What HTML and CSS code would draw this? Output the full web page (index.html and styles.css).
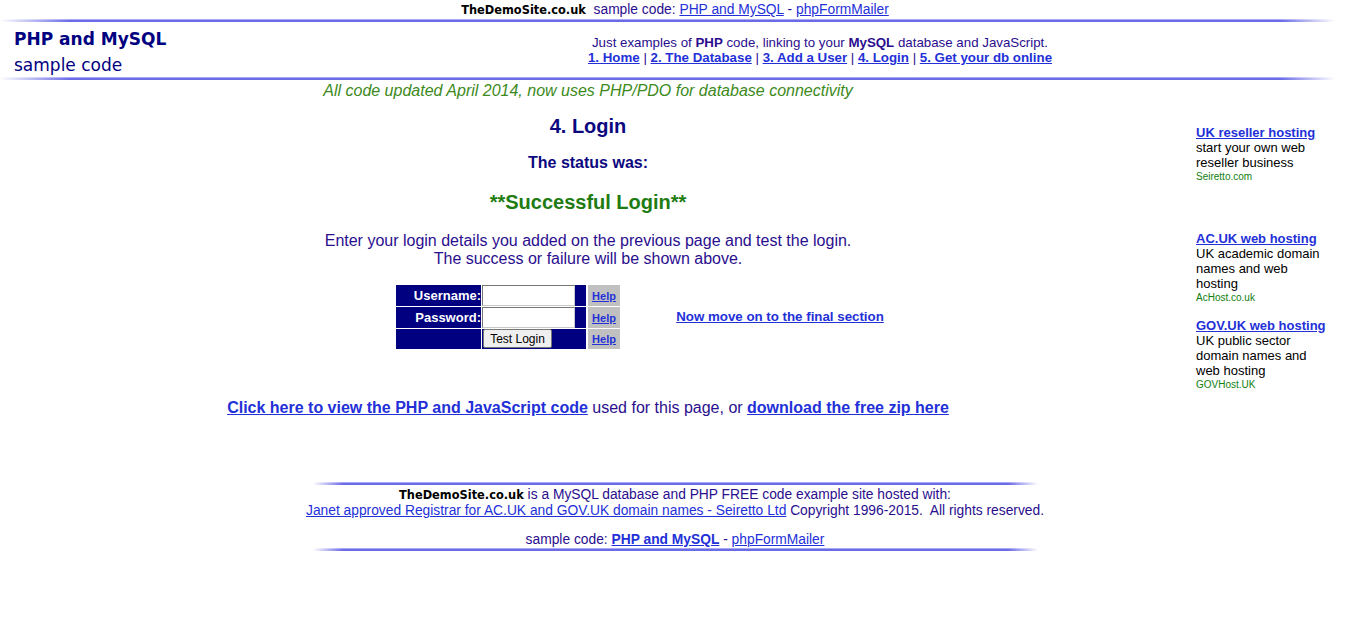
FILE: index.html
```html
<!DOCTYPE html>
<html>
<head>
<meta charset="utf-8">
<title>PHP and MySQL sample code - Login</title>
<link rel="stylesheet" href="styles.css">
</head>
<body>
<div class="topbar"><span class="brand">TheDemoSite.co.uk</span>&nbsp; sample code: <a href="#">PHP and MySQL</a> - <a href="#">phpFormMailer</a></div>
<div class="rule rule-wide"></div>
<div class="header">
  <div class="title">
    <div class="title-main">PHP and MySQL</div>
    <div class="title-sub">sample code</div>
  </div>
  <div class="intro">
    <div>Just examples of <b>PHP</b> code, linking to your <b>MySQL</b> database and JavaScript.</div>
    <div class="nav"><a href="#">1. Home</a> | <a href="#">2. The Database</a> | <a href="#">3. Add a User</a> | <a href="#">4. Login</a> | <a href="#">5. Get your db online</a></div>
  </div>
</div>
<div class="rule rule-wide"></div>
<div class="page">
  <div class="main">
    <div class="notice">All code updated April 2014, now uses PHP/PDO for database connectivity</div>
    <h2 class="heading">4. Login</h2>
    <div class="status">The status was:</div>
    <div class="result">**Successful Login**</div>
    <p class="explain">Enter your login details you added on the previous page and test the login.<br>The success or failure will be shown above.</p>
    <div class="formrow">
      <div class="formcell">
        <div class="loginform">
          <div class="lbl">Username:</div>
          <div class="fld"><input class="txt" type="text"></div>
          <div class="hlp"><a href="#">Help</a></div>
          <div class="lbl">Password:</div>
          <div class="fld"><input class="txt" type="password"></div>
          <div class="hlp"><a href="#">Help</a></div>
          <div class="lbl"></div>
          <div class="fld"><button class="btn" type="button">Test Login</button></div>
          <div class="hlp"><a href="#">Help</a></div>
        </div>
      </div>
      <div class="nextcell"><a class="next" href="#">Now move on to the final section</a></div>
    </div>
    <div class="codelinks"><a href="#">Click here to view the PHP and JavaScript code</a> used for this page, or <a href="#">download the free zip here</a></div>
  </div>
  <div class="side">
    <div class="ad ad-first">
      <a href="#">UK reseller hosting</a>
      <div>start your own web reseller business</div>
      <div class="adurl">Seiretto.com</div>
    </div>
    <div class="ad ad-second">
      <a href="#">AC.UK web hosting</a>
      <div>UK academic domain names and web hosting</div>
      <div class="adurl">AcHost.co.uk</div>
    </div>
    <div class="ad">
      <a href="#">GOV.UK web hosting</a>
      <div>UK public sector domain names and web hosting</div>
      <div class="adurl">GOVHost.UK</div>
    </div>
  </div>
</div>
<div class="footer">
  <div class="rule rule-foot"></div>
  <div class="foot-text">
    <div><span class="brand">TheDemoSite.co.uk</span> is a MySQL database and PHP FREE code example site hosted with:</div>
    <div><a class="plain" href="#">Janet approved Registrar for AC.UK and GOV.UK domain names - Seiretto Ltd</a> Copyright 1996-2015.&nbsp; All rights reserved.</div>
    <div class="foot-sample">sample code: <a href="#">PHP and MySQL</a> - <a class="plain" href="#">phpFormMailer</a></div>
  </div>
  <div class="rule rule-foot"></div>
</div>
</body>
</html>
```

FILE: styles.css
```css
html, body {
  margin: 0;
  padding: 0;
  background: #ffffff;
}
body {
  font-family: "Liberation Sans", Arial, sans-serif;
  font-size: 13px;
  color: #2a0e8e;
}
a {
  color: #2330d8;
}
.brand {
  font-family: "Comic Sans MS", "DejaVu Sans", sans-serif;
  font-weight: bold;
  font-size: 11.4px;
  color: #000000;
}
.topbar {
  text-align: center;
  line-height: 16px;
  padding-top: 2px;
  font-size: 13.8px;
}
.topbar a {
  color: #2330d8;
}
.rule {
  height: 1px;
  background: #a8a8f4;
  border-bottom: 2px solid #6b6be6;
}
.rule-wide {
  margin-top: 1px;
  width: 1335px;
  -webkit-mask-image: linear-gradient(to right, transparent 0, #000 70px, #000 1280px, transparent 1335px);
  mask-image: linear-gradient(to right, transparent 0, #000 70px, #000 1280px, transparent 1335px);
}
.header {
  display: flex;
  height: 55px;
  margin-top: -1px;
}
.title {
  width: 298px;
  padding: 5px 0 0 14px;
  box-sizing: border-box;
  color: #000080;
  font-family: "Comic Sans MS", "DejaVu Sans", sans-serif;
}
.title-main {
  font-weight: bold;
  font-size: 17px;
  line-height: 26px;
}
.title-sub {
  font-size: 17px;
  line-height: 26px;
}
.intro {
  flex: 1;
  display: flex;
  flex-direction: column;
  justify-content: center;
  text-align: center;
  line-height: 15px;
  font-size: 13.3px;
  padding-right: 8px;
  padding-top: 3px;
}
.nav a {
  font-weight: bold;
  color: #2330d8;
}
.page {
  display: flex;
  padding: 0 8px;
}
.main {
  width: 1160px;
  text-align: center;
}
.notice {
  font-style: italic;
  font-size: 16px;
  line-height: 20px;
  color: #3d8a1c;
  margin: 1px 0 0;
}
.heading {
  font-size: 20px;
  line-height: 24px;
  color: #0c0880;
  margin: 13px 0 0;
}
.status {
  font-size: 16px;
  font-weight: bold;
  line-height: 19px;
  color: #0c0880;
  margin-top: 15px;
}
.result {
  font-size: 20px;
  font-weight: bold;
  line-height: 24px;
  color: #1e7c12;
  margin-top: 18px;
}
.explain {
  font-size: 16px;
  line-height: 18px;
  margin: 18px 0 0;
}
.formrow {
  display: grid;
  grid-template-columns: 272px 272px;
  margin: 17px 0 0 364px;
  align-items: center;
}
.formcell {
  display: flex;
  justify-content: center;
}
.loginform {
  display: grid;
  grid-template-columns: 85px 104px 33px;
  grid-template-rows: 21px 21px 20px;
  gap: 1px;
  column-gap: 1px;
}
.lbl {
  background: #000080;
  color: #ffffff;
  font-weight: bold;
  font-size: 13px;
  text-align: right;
  line-height: 21px;
}
.fld {
  background: #000080;
  display: flex;
  align-items: stretch;
}
.txt {
  width: 93px;
  height: 21px;
  box-sizing: border-box;
  border: 1px solid #767676;
  border-right-color: #c8c8c8;
  border-bottom-color: #c8c8c8;
  margin: 0;
  padding: 0 2px;
  background: #ffffff;
}
.btn {
  width: 69px;
  height: 19px;
  box-sizing: border-box;
  margin: 0 0 0 1px;
  padding: 0;
  font-family: "Liberation Sans", Arial, sans-serif;
  font-size: 12px;
  color: #000000;
  background: #efefef;
  border: 1px solid #767676;
  border-radius: 2px;
}
.hlp {
  background: #c0c0c0;
  margin-left: 1px;
  display: flex;
  align-items: center;
  justify-content: center;
  font-size: 11px;
  font-weight: bold;
}
.hlp a {
  color: #2330d8;
}
.nextcell {
  text-align: center;
  padding-bottom: 2px;
}
.next {
  font-weight: bold;
  font-size: 13.3px;
  color: #2330d8;
}
.codelinks {
  font-size: 16px;
  line-height: 19px;
  margin-top: 49px;
}
.codelinks a {
  font-weight: bold;
  color: #2330d8;
}
.side {
  width: 130px;
  padding: 45px 0 0 28px;
  font-size: 13px;
  line-height: 15px;
  color: #000000;
}
.side a {
  font-weight: bold;
  color: #2330d8;
}
.ad-first {
  margin-bottom: 48px;
}
.ad-second {
  margin-bottom: 14px;
}
.adurl {
  font-size: 10px;
  line-height: 13px;
  color: #108010;
}
.footer {
  width: 725px;
  margin: 65px auto 0;
  text-align: center;
}
.rule-foot {
  -webkit-mask-image: linear-gradient(to right, transparent 0, #000 30px, #000 695px, transparent 725px);
  mask-image: linear-gradient(to right, transparent 0, #000 30px, #000 695px, transparent 725px);
}
.foot-text {
  padding: 2px 0 0;
  line-height: 16px;
  white-space: nowrap;
  margin: 0 -40px;
  font-size: 13.8px;
}
.foot-text .brand {
  font-size: 11.4px;
}
.foot-sample {
  margin-top: 13px;
}
.foot-text a {
  color: #2330d8;
}
.foot-sample a:first-child {
  font-weight: bold;
}
```
